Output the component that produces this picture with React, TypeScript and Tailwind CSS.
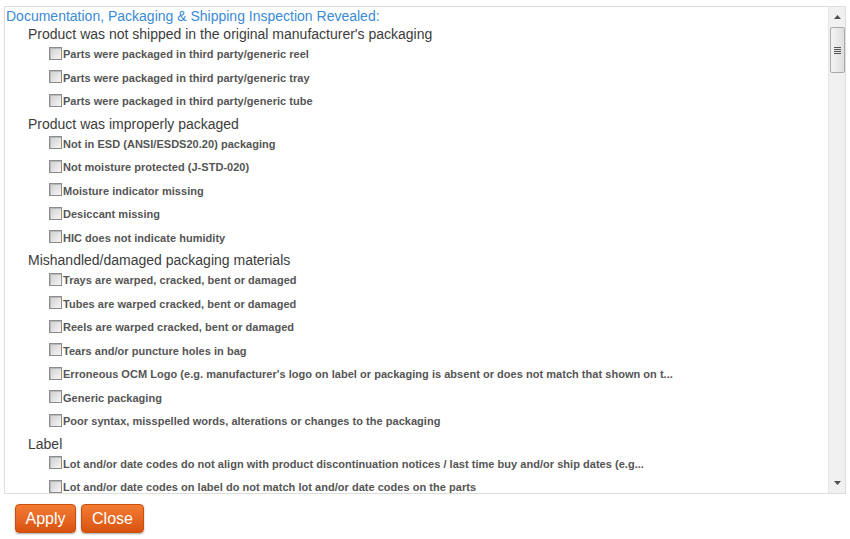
import React from "react";

type Group = { title: string; items: string[] };

const groups: Group[] = [
  {
    title: "Product was not shipped in the original manufacturer's packaging",
    items: [
      "Parts were packaged in third party/generic reel",
      "Parts were packaged in third party/generic tray",
      "Parts were packaged in third party/generic tube",
    ],
  },
  {
    title: "Product was improperly packaged",
    items: [
      "Not in ESD (ANSI/ESDS20.20) packaging",
      "Not moisture protected (J-STD-020)",
      "Moisture indicator missing",
      "Desiccant missing",
      "HIC does not indicate humidity",
    ],
  },
  {
    title: "Mishandled/damaged packaging materials",
    items: [
      "Trays are warped, cracked, bent or damaged",
      "Tubes are warped cracked, bent or damaged",
      "Reels are warped cracked, bent or damaged",
      "Tears and/or puncture holes in bag",
      "Erroneous OCM Logo (e.g. manufacturer's logo on label or packaging is absent or does not match that shown on t...",
      "Generic packaging",
      "Poor syntax, misspelled words, alterations or changes to the packaging",
    ],
  },
  {
    title: "Label",
    items: [
      "Lot and/or date codes do not align with product discontinuation notices / last time buy and/or ship dates (e.g...",
      "Lot and/or date codes on label do not match lot and/or date codes on the parts",
    ],
  },
];

function CheckRow({ label }: { label: string }) {
  return (
    <label className="flex h-[23.5px] items-center pl-[43px]">
      <span className="-mt-[5px] h-[13px] w-[13px] shrink-0 border border-[#8c8c8c] bg-gradient-to-br from-[#cfcfcf] to-[#f5f5f5] shadow-[inset_1px_1px_0_#b8b8b8]" />
      <span className="-mt-[2px] ml-px text-[11px] font-bold leading-[13px] tracking-[0.03px] text-[#555]">
        {label}
      </span>
    </label>
  );
}

function ScrollBar() {
  return (
    <div className="flex w-[17px] shrink-0 flex-col border-l border-[#e6e6e6] bg-[#f1f1f1]">
      <div className="flex h-[20px] items-center justify-center">
        <svg width="7" height="4" viewBox="0 0 7 4">
          <path d="M3.5 0L7 4H0z" fill="#505050" />
        </svg>
      </div>
      <div className="mx-auto flex h-[46px] w-[15px] items-center justify-center rounded-[2px] border border-[#a9a9a9] bg-gradient-to-r from-[#f4f4f4] to-[#dedede]">
        <div className="flex flex-col gap-[1px]">
          <div className="h-px w-[7px] bg-[#555]" />
          <div className="h-px w-[7px] bg-[#555]" />
          <div className="h-px w-[7px] bg-[#555]" />
          <div className="h-px w-[7px] bg-[#555]" />
        </div>
      </div>
      <div className="flex-1" />
      <div className="flex h-[20px] items-center justify-center">
        <svg width="7" height="4" viewBox="0 0 7 4">
          <path d="M0 0H7L3.5 4z" fill="#505050" />
        </svg>
      </div>
    </div>
  );
}

export default function App() {
  return (
    <div className="h-[539px] w-[850px] bg-white font-['Liberation_Sans',Arial,sans-serif]">
      <div className="ml-[4px] pt-[6px]">
        <div className="flex h-[488px] w-[842px] border border-[#dedede]">
          <div className="flex-1 overflow-hidden pl-px pt-px">
            <div className="h-[17px] text-[14px] leading-[16px] text-[#3a8ad4]">
              Documentation, Packaging &amp; Shipping Inspection Revealed:
            </div>
            {groups.map((g) => (
              <div key={g.title}>
                <div className="mt-[1px] h-[18px] pl-[22px] text-[14px] leading-[16px] text-[#3c3c3c]">
                  {g.title}
                </div>
                {g.items.map((it) => (
                  <CheckRow key={it} label={it} />
                ))}
              </div>
            ))}
          </div>
          <ScrollBar />
        </div>
      </div>
      <div className="ml-[15px] mt-[10px] flex gap-[5px]">
        <button className="h-[29px] w-[61px] rounded-[4px] border border-[#c9500c] bg-gradient-to-b from-[#f47c34] to-[#d8520a] text-[16px] text-white shadow-[0_1px_2px_rgba(0,0,0,0.35)]">
          Apply
        </button>
        <button className="h-[29px] w-[63px] rounded-[4px] border border-[#c9500c] bg-gradient-to-b from-[#f47c34] to-[#d8520a] text-[16px] text-white shadow-[0_1px_2px_rgba(0,0,0,0.35)]">
          Close
        </button>
      </div>
    </div>
  );
}
